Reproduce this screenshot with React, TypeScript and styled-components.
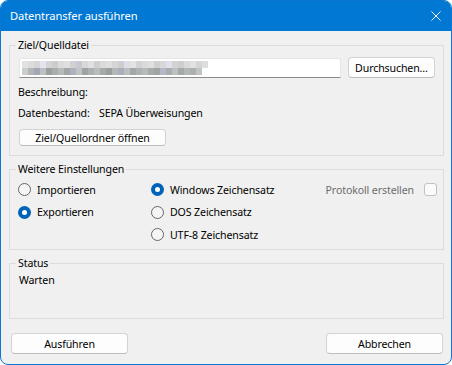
import React from "react";
import styled, { createGlobalStyle, css } from "styled-components";

const GlobalStyle = createGlobalStyle`
  html, body { margin: 0; padding: 0; background: #ffffff; }
  body {
    font-family: "Noto Sans", "Segoe UI", sans-serif;
    font-size: 10.6px;
    letter-spacing: -0.12px;
    color: #000;
  }
  * { box-sizing: border-box; }
`;

const Window = styled.div`
  width: 452px;
  height: 365px;
  border: 1px solid #0a78d2;
  border-radius: 8px;
  overflow: hidden;
  background: #f0f0f0;
  display: flex;
  flex-direction: column;
`;

const TitleBar = styled.div`
  flex: none;
  height: 31px;
  margin: -1px -1px 0 -1px;
  padding: 1px 11px 0 10px;
  background: #0078d4;
  color: #fff;
  display: flex;
  align-items: center;
  justify-content: space-between;
`;

const Title = styled.span`
  font-size: 11.2px;
  line-height: 16px;
`;

const Body = styled.div`
  flex: 1;
  display: flex;
  flex-direction: column;
  gap: 5px;
  padding: 6px 7px 10px 8px;
`;

const Group = styled.fieldset<{ $grow?: boolean; $pb?: number }>`
  margin: 0;
  padding: 0 8px ${(p) => p.$pb ?? 8}px 9px;
  border: 1px solid #dcdcdc;
  min-width: 0;
  ${(p) => p.$grow && css`flex: 1;`}
`;

const Legend = styled.legend`
  padding: 0 2px;
  margin-left: -3px;
  line-height: 16px;
`;

const FileRow = styled.div`
  display: flex;
  align-items: flex-end;
  gap: 7px;
  margin-top: 4px;
`;

const FileField = styled.div`
  flex: 0 0 322px;
  height: 20px;
  background: #ffffff;
  border: 1px solid #e6e6e6;
  border-bottom: 1px solid #8a8a8a;
  border-radius: 3px 3px 0 0;
  display: flex;
  align-items: center;
  padding-left: 2px;
`;

const Button = styled.button<{ $w?: number; $h?: number }>`
  font-family: inherit;
  font-size: inherit;
  letter-spacing: inherit;
  color: #000;
  background: #fdfdfd;
  border: 1px solid #d3d3d3;
  border-bottom-color: #bdbdbd;
  border-radius: 4px;
  height: ${(p) => p.$h ?? 21}px;
  ${(p) => (p.$w ? css`width: ${p.$w}px;` : css`flex: 1;`)}
  padding: 0;
  line-height: 14px;
  display: flex;
  align-items: center;
  justify-content: center;
`;

const InfoGrid = styled.div`
  display: grid;
  grid-template-columns: 81px 1fr;
  grid-auto-rows: 16px;
  row-gap: 5px;
  margin: 6px 0 0 -1px;
  line-height: 16px;
  white-space: nowrap;
`;

const OpenRow = styled.div`
  margin-top: 8px;
  display: flex;
`;

const OptionsGrid = styled.div`
  display: grid;
  grid-template-columns: 133px 1fr auto;
  grid-template-rows: 23px 22px 23px;
  margin: 1px -2px 0 -1px;
`;

const RadioItem = styled.label<{ $col: number; $row: number }>`
  grid-column: ${(p) => p.$col};
  grid-row: ${(p) => p.$row};
  display: flex;
  align-items: center;
  gap: 6px;
  line-height: 16px;
`;

const RadioCircle = styled.span<{ $checked?: boolean }>`
  width: 13px;
  height: 13px;
  border-radius: 50%;
  flex: none;
  display: flex;
  align-items: center;
  justify-content: center;
  ${(p) =>
    p.$checked
      ? css`
          background: #0063b8;
          &::after {
            content: "";
            width: 5px;
            height: 5px;
            border-radius: 50%;
            background: #ffffff;
          }
        `
      : css`
          border: 1px solid #666666;
          background: #f5f5f5;
        `}
`;

const CheckItem = styled.label`
  grid-column: 3;
  grid-row: 1;
  display: flex;
  align-items: center;
  gap: 10px;
  color: #6d6d6d;
  line-height: 16px;
`;

const CheckBox = styled.span`
  width: 13px;
  height: 13px;
  border: 1px solid #c2c2c2;
  background: #fbfbfb;
  border-radius: 3px;
`;

const StatusText = styled.div`
  line-height: 16px;
  margin-top: 1px;
`;

const ButtonRow = styled.div`
  display: flex;
  justify-content: space-between;
  margin-top: 9px;
  padding: 0 1px 0 2px;
`;

const topRow = [226, 220, 214, 228, 212, 204, 219, 223, 209, 200, 216, 224, 207, 218, 222, 213, 205, 221, 227, 211, 218, 223, 208, 216, 224, 211, 206, 219, 225, 213, 221];
const bottomRow = [206, 182, 168, 192, 160, 173, 186, 166, 178, 196, 163, 176, 189, 170, 158, 183, 175, 191, 167, 178, 187, 171, 164, 185, 174, 192, 169, 183, 176, 196, 0];
const tinted = new Set([3, 9, 17, 24]);

const Mosaic = () => (
  <svg width="190" height="14" viewBox="0 0 190 14" aria-hidden="true">
    {topRow.map((v, i) => (
      <rect key={"t" + i} x={i * 6} y={0} width={6} height={7} fill={`rgb(${v},${v},${tinted.has(i) ? Math.min(v + 12, 255) : v})`} />
    ))}
    {bottomRow.map((v, i) =>
      v ? (
        <rect key={"b" + i} x={i * 6} y={7} width={6} height={7} fill={`rgb(${v - 4},${v},${tinted.has(i + 1) ? v + 14 : v})`} />
      ) : null
    )}
  </svg>
);

const CloseIcon = () => (
  <svg width="10" height="10" viewBox="0 0 10 10" aria-hidden="true">
    <path d="M0.5 0.5 L9.5 9.5 M9.5 0.5 L0.5 9.5" stroke="#ffffff" strokeWidth="1" fill="none" />
  </svg>
);

export default function App() {
  return (
    <>
      <GlobalStyle />
      <Window>
        <TitleBar>
          <Title>Datentransfer ausführen</Title>
          <CloseIcon />
        </TitleBar>
        <Body>
          <Group $pb={9}>
            <Legend>Ziel/Quelldatei</Legend>
            <FileRow>
              <FileField>
                <Mosaic />
              </FileField>
              <Button>Durchsuchen…</Button>
            </FileRow>
            <InfoGrid>
              <span>Beschreibung:</span>
              <span />
              <span>Datenbestand:</span>
              <span>SEPA Überweisungen</span>
            </InfoGrid>
            <OpenRow>
              <Button $w={147} $h={17}>Ziel/Quellordner öffnen</Button>
            </OpenRow>
          </Group>
          <Group $pb={3}>
            <Legend>Weitere Einstellungen</Legend>
            <OptionsGrid>
              <RadioItem $col={1} $row={1}>
                <RadioCircle />
                Importieren
              </RadioItem>
              <RadioItem $col={1} $row={2}>
                <RadioCircle $checked />
                Exportieren
              </RadioItem>
              <RadioItem $col={2} $row={1}>
                <RadioCircle $checked />
                Windows Zeichensatz
              </RadioItem>
              <RadioItem $col={2} $row={2}>
                <RadioCircle />
                DOS Zeichensatz
              </RadioItem>
              <RadioItem $col={2} $row={3}>
                <RadioCircle />
                UTF-8 Zeichensatz
              </RadioItem>
              <CheckItem>
                Protokoll erstellen
                <CheckBox />
              </CheckItem>
            </OptionsGrid>
          </Group>
          <Group $grow>
            <Legend>Status</Legend>
            <StatusText>Warten</StatusText>
          </Group>
          <ButtonRow>
            <Button $w={117}>Ausführen</Button>
            <Button $w={117}>Abbrechen</Button>
          </ButtonRow>
        </Body>
      </Window>
    </>
  );
}
